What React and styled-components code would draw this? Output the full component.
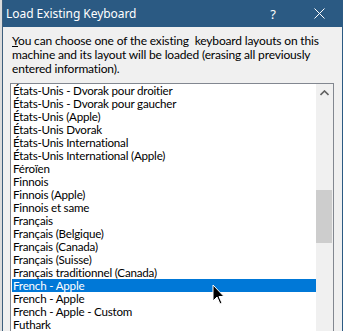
import React from 'react'
import styled, { createGlobalStyle } from 'styled-components'

const GlobalStyle = createGlobalStyle`
  html, body {
    margin: 0;
    padding: 0;
    background: #dcdcdc;
  }
  body {
    font-family: "Noto Sans", "Open Sans", sans-serif;
  }
`

const Page = styled.div`
  position: relative;
  display: flex;
  height: 331px;
  padding-left: 2px;
  overflow: hidden;
`

const Window = styled.div`
  flex: 1;
  display: flex;
  flex-direction: column;
  background: #f0f0f0;
  border-left: 1px solid #3d5f7d;
  border-right: 1px solid #2b5a83;
`

const TitleBar = styled.div`
  display: flex;
  align-items: center;
  height: 27px;
  background: #2b5a83;
  color: #ffffff;
  font-size: 12px;
`

const Title = styled.div`
  flex: 1;
  padding-left: 3px;
  letter-spacing: -0.05px;
`

const TitleButton = styled.div`
  width: 46px;
  height: 27px;
  display: flex;
  align-items: center;
  justify-content: center;
  font-size: 13px;
`

const Body = styled.div`
  flex: 1;
  display: flex;
  flex-direction: column;
  padding: 7px 8px 0 7px;
  min-height: 0;
`

const Intro = styled.p`
  margin: 0 0 7px 2px;
  font-family: Lato, "Noto Sans", sans-serif;
  font-size: 12px;
  letter-spacing: -0.16px;
  line-height: 14px;
  color: #000000;
  white-space: pre;
`

const ListBox = styled.div`
  flex: 1;
  display: flex;
  border: 1px solid #828790;
  border-bottom: none;
  background: #ffffff;
  min-height: 0;
`

const Items = styled.div`
  flex: 1;
  padding-left: 1px;
`

const Item = styled.div`
  height: 13px;
  line-height: 13px;
  padding-left: 1px;
  font-family: Lato, "Noto Sans", sans-serif;
  font-size: 11.6px;
  letter-spacing: -0.2px;
  white-space: nowrap;
  color: ${p => (p.$selected ? '#ffffff' : '#000000')};
  background: ${p => (p.$selected ? '#0078d7' : 'transparent')};
`

const ScrollBar = styled.div`
  width: 17px;
  display: flex;
  flex-direction: column;
  background: #f0f0f0;
`

const ArrowButton = styled.div`
  height: 17px;
  display: flex;
  align-items: center;
  justify-content: center;
`

const Thumb = styled.div`
  margin: 89px 1px 0 0;
  height: 53px;
  background: #cdcdcd;
`

const Cursor = styled.svg`
  position: absolute;
  left: 212px;
  top: 284px;
`

const layouts = [
  'États-Unis - Dvorak pour droitier',
  'États-Unis - Dvorak pour gaucher',
  'États-Unis (Apple)',
  'États-Unis Dvorak',
  'États-Unis International',
  'États-Unis International (Apple)',
  'Féroïen',
  'Finnois',
  'Finnois (Apple)',
  'Finnois et same',
  'Français',
  'Français (Belgique)',
  'Français (Canada)',
  'Français (Suisse)',
  'Français traditionnel (Canada)',
  'French - Apple',
  'French - Apple',
  'French - Apple - Custom',
  'Futhark',
  'Gaélique irlandais',
]

const App = () => {
  return (
    <Page>
      <GlobalStyle />
      <Window>
        <TitleBar>
          <Title>Load Existing Keyboard</Title>
          <TitleButton>?</TitleButton>
          <TitleButton>
            <svg width="11" height="11" viewBox="0 0 11 11">
              <path d="M0.5 0.5 L10.5 10.5 M10.5 0.5 L0.5 10.5" stroke="#ffffff" strokeWidth="1" fill="none" />
            </svg>
          </TitleButton>
        </TitleBar>
        <Body>
          <Intro>
            <u>Y</u>{'ou can choose one of the existing  keyboard layouts on this\nmachine and its layout will be loaded (erasing all previously\nentered information).'}
          </Intro>
          <ListBox>
            <Items>
              {layouts.map((name, i) => (
                <Item key={i} $selected={i === 15}>{name}</Item>
              ))}
            </Items>
            <ScrollBar>
              <ArrowButton>
                <svg width="9" height="6" viewBox="0 0 9 6">
                  <path d="M0.5 5 L4.5 1 L8.5 5" stroke="#606060" strokeWidth="1.6" fill="none" />
                </svg>
              </ArrowButton>
              <Thumb />
            </ScrollBar>
          </ListBox>
        </Body>
      </Window>
      <Cursor width="13" height="21" viewBox="0 0 13 21">
        <path d="M1 1 L1 17 L5 13 L8 20 L10 19 L7 12.5 L12 12.5 Z" fill="#000000" stroke="#ffffff" strokeWidth="1" strokeLinejoin="round" />
      </Cursor>
    </Page>
  )
}

export default App
